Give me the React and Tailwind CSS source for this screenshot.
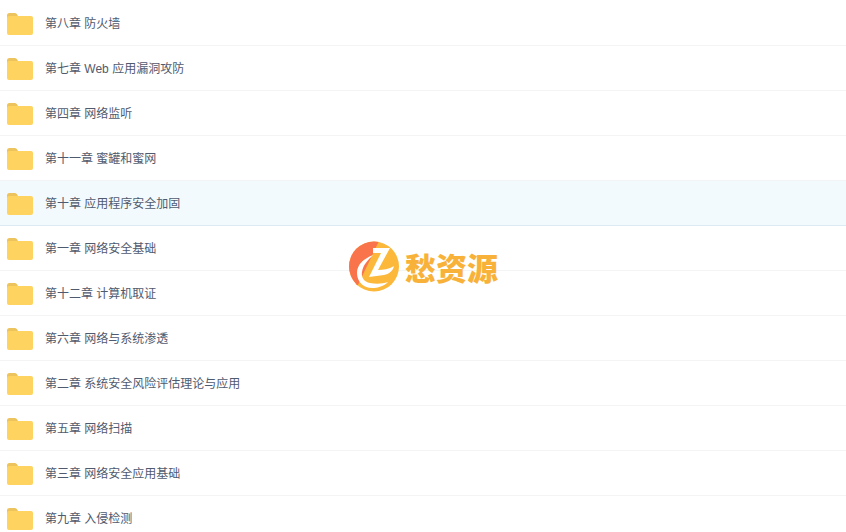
const folders = [
  "第八章 防火墙",
  "第七章 Web 应用漏洞攻防",
  "第四章 网络监听",
  "第十一章 蜜罐和蜜网",
  "第十章 应用程序安全加固",
  "第一章 网络安全基础",
  "第十二章 计算机取证",
  "第六章 网络与系统渗透",
  "第二章 系统安全风险评估理论与应用",
  "第五章 网络扫描",
  "第三章 网络安全应用基础",
  "第九章 入侵检测",
];

function FolderIcon() {
  return (
    <svg width="26" height="22" viewBox="0 0 26 22" className="mt-px shrink-0">
      <path d="M0 2.500A2.500 2.500 0 0 1 2.500 0h5a3 3 0 0 1 2.500 1.300L11.500 4H4a2 2 0 0 0-2 2H0z" fill="#ecc35c" />
      <path d="M0 5a2 2 0 0 1 2-2h22a2 2 0 0 1 2 2V20a2 2 0 0 1-2 2H2a2 2 0 0 1-2-2z" fill="#ffd35f" />
    </svg>
  );
}

function Logo() {
  return (
    <div className="absolute left-[349px] top-[241px] flex items-center gap-[6px]">
      <svg width="50" height="51" viewBox="0 0 50 51">
        <defs>
          <clipPath id="orange-part">
            <path d="M0 0h30L8 46 0 51z" />
          </clipPath>
        </defs>
        <circle cx="25" cy="25.500" r="25" fill="#fbb83a" />
        <circle cx="25" cy="25.500" r="25" fill="#f9744a" clipPath="url(#orange-part)" />
        <path d="M24 7H41L29 29C34 29 40 28 45 25C44 30 40 33 35 34L20 36L32 12H24z" fill="#fff" />
        <path d="M24 14C14 18 8 24 8 32C8 41 15 47 23 47C29 47 35 45 39 41C33 43 27 43 21 42C15 41 12 36 13 31C14 24 19 19 24 14z" fill="#fff" />
      </svg>
      <span className="font-['Noto_Sans_CJK_SC',sans-serif] text-[31px] leading-none font-black text-[#f8b23a] whitespace-nowrap">
        愁资源
      </span>
    </div>
  );
}

export default function App() {
  return (
    <div className="relative h-[532px] w-[846px] overflow-hidden bg-white font-['Liberation_Sans','Noto_Sans_CJK_SC',sans-serif]">
      <div className="flex flex-col pt-px">
        {folders.map((name, i) => (
          <div
            key={name}
            className={`flex h-[45px] shrink-0 items-center gap-[12px] border-b pl-[7px] ${
              i === 4 ? "border-[#dbeaf5] bg-[#f3fafd]" : "border-[#f3f4f5]"
            }`}
          >
            <FolderIcon />
            <span className="pt-[2px] text-xs text-[#505a6e]">{name}</span>
          </div>
        ))}
      </div>
      <Logo />
    </div>
  );
}
